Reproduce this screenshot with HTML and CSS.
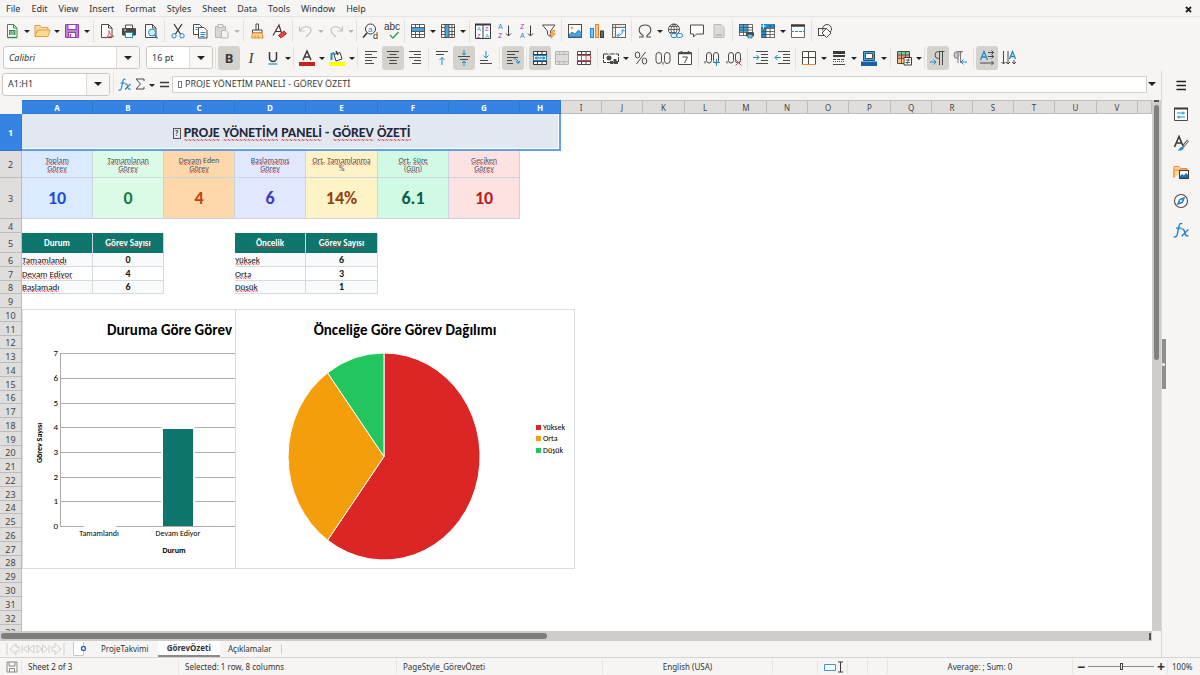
FILE: index.html
```html
<!DOCTYPE html>
<html lang="en">
<head>
<meta charset="utf-8">
<title>Spreadsheet</title>
<link rel="stylesheet" href="styles.css">
</head>
<body>
<div class="app">
  <header class="menubar">
    <nav class="menus" aria-label="Menu">
      <button>File</button><button>Edit</button><button>View</button><button>Insert</button><button>Format</button><button>Styles</button><button>Sheet</button><button>Data</button><button>Tools</button><button>Window</button><button>Help</button>
    </nav>
    <button class="close" aria-label="Close"><svg width="7" height="7" viewBox="0 0 7 7"><path d="M1 1l5 5M6 1L1 6" stroke="#222" stroke-width="1.8"/></svg></button>
  </header>

  <div class="toolbar">
    <button class="tb" aria-label="New"><svg viewBox="0 0 16 16"><path d="M3.500 1.500h6l3.500 3.500v9.500H3.500z" fill="#fff" stroke="#309048"/><path d="M9.500 1.500v3.500H13" fill="none" stroke="#309048"/><path d="M3.500 14.500h9.500" stroke="#309048" stroke-width="1.500"/><rect x="5" y="7" width="6.500" height="5" fill="#309048"/><path d="M6 9h4.500M6 11h4.500" stroke="#fff" stroke-width=".8"/></svg></button><button class="drop" aria-label="New options"></button>
    <button class="tb" aria-label="Open"><svg viewBox="0 0 16 16"><path d="M1 13.500V2.500h5l1.500 2H14v3" fill="#fbd9a5" stroke="#ed9a45"/><path d="M1 13.500L3.500 7H16l-2 6.500z" fill="#f8db8f" stroke="#ed9a45"/></svg></button><button class="drop" aria-label="Open options"></button>
    <button class="tb" aria-label="Save"><svg viewBox="0 0 16 16"><path d="M1.500 1.500h13v13h-13z" fill="#c17fd2" stroke="#9a3fb0"/><rect x="4" y="1.500" width="8" height="5" fill="#fff" stroke="#9a3fb0"/><rect x="4.500" y="9.500" width="7" height="5" fill="#fff" stroke="#9a3fb0"/><path d="M6.500 11v3" stroke="#9a3fb0" stroke-width="1.500"/></svg></button><button class="drop" aria-label="Save options"></button>
    <span class="sep"></span>
    <button class="tb" aria-label="Export as PDF"><svg viewBox="0 0 16 16"><path d="M2.500 1.500h7l3.500 3.500v9.500H2.500z" fill="#fff" stroke="#4a4a48"/><path d="M9.500 1.500v3.500H13" fill="none" stroke="#4a4a48"/><path d="M6.500 15c3-1.500 4-4.500 3.500-7.500 0 3.500 2 5 5 6-3-.5-5.500 0-8.500 1.500z" fill="#fff" stroke="#e0444e" stroke-width=".9"/></svg></button>
    <button class="tb" aria-label="Print"><svg viewBox="0 0 16 16"><path d="M4.500 5V2h7v3" fill="#fff" stroke="#4a4a48"/><rect x="1" y="5" width="14" height="7.500" rx="1" fill="#4a4a48"/><rect x="4.500" y="9.500" width="7" height="5" fill="#fff" stroke="#1e8bcd"/><path d="M3 7h2" stroke="#fff"/></svg></button>
    <button class="tb" aria-label="Print preview"><svg viewBox="0 0 16 16"><path d="M2.500 1.500h7l3.500 3.500v9.500H2.500z" fill="#fff" stroke="#4a4a48"/><path d="M9.500 1.500v3.500H13" fill="none" stroke="#4a4a48"/><circle cx="9" cy="9.500" r="3.500" fill="#d4ecfa" stroke="#1e8bcd"/><path d="M11.500 12l3 3.500" stroke="#1e8bcd" stroke-width="1.500"/></svg></button>
    <span class="sep"></span>
    <button class="tb" aria-label="Cut"><svg viewBox="0 0 16 16"><path d="M4 1l6.500 10M12 1L5.500 11" stroke="#3a3a38" stroke-width="1.300"/><circle cx="4" cy="12.800" r="2.200" fill="none" stroke="#1e8bcd"/><circle cx="12" cy="12.800" r="2.200" fill="none" stroke="#1e8bcd"/></svg></button>
    <button class="tb" aria-label="Copy"><svg viewBox="0 0 16 16"><path d="M1.500 1.500h6l2.500 2.500v7.500H1.500z" fill="#fff" stroke="#4a4a48"/><path d="M6.500 4.500h5.500l3 3v7.500H6.500z" fill="#fff" stroke="#4a4a48"/><path d="M8.500 9.500h5M8.500 11.500h5M8.500 13.500h4M3.500 4.500h3M3.500 6.500h2" stroke="#1e8bcd"/></svg></button>
    <button class="tb" aria-label="Paste" disabled><svg viewBox="0 0 16 16"><path d="M1.500 3.500h10v11h-10z" fill="#d8d7d5" stroke="#b8b7b5"/><path d="M4 1.500h5v3H4z" fill="#eee" stroke="#b8b7b5"/><path d="M7.500 7.500h4.500l2 2v5.500H7.500z" fill="#f6f5f4" stroke="#b8b7b5"/></svg></button><button class="drop" aria-label="Paste options" disabled></button>
    <span class="sep"></span>
    <button class="tb" aria-label="Clone formatting"><svg viewBox="0 0 16 16"><path d="M7 1h2.500v6H7z" fill="#fff" stroke="#4a4a48"/><path d="M3.500 7h9.500v3H3.500z" fill="#fff" stroke="#4a4a48"/><path d="M3.500 10h9.500l1 5H2.500z" fill="#f8db8f" stroke="#ed8733"/><path d="M6 12v3M9 12v3" stroke="#ed8733"/></svg></button>
    <button class="tb" aria-label="Clear formatting"><svg viewBox="0 0 16 16"><path d="M2 12.500L8 2l2.500 8M4.500 8.500h6" fill="none" stroke="#3a3a38" stroke-width="1.200"/><path d="M7.500 12.500l5.500-4.500 2.500 2.500-5.500 4.500z" fill="#e0444e" stroke="#c9211e"/></svg></button>
    <span class="sep"></span>
    <button class="tb" aria-label="Undo" disabled><svg viewBox="0 0 16 16"><path d="M1.500 3.500v4.500h5M2 7.500c3-5 11-5 11 0 0 3-3 4-5 6.500" fill="none" stroke="#c3c2c0" stroke-width="1.200"/></svg></button><button class="drop" aria-label="Undo list" disabled></button>
    <button class="tb" aria-label="Redo" disabled><svg viewBox="0 0 16 16"><path d="M14.500 3.500v4.500h-5M14 7.500c-3-5-11-5-11 0 0 3 3 4 5 6.500" fill="none" stroke="#c3c2c0" stroke-width="1.200"/></svg></button><button class="drop" aria-label="Redo list" disabled></button>
    <span class="sep sep-tight"></span>
    <button class="tb" aria-label="Find and replace"><svg viewBox="0 0 16 16"><circle cx="8.500" cy="6" r="5" fill="#fff" stroke="#3a3a38"/><path d="M5 10L1 14.500" stroke="#3a3a38" stroke-width="1.600"/><text x="6" y="8.500" font-size="8" fill="#1e8bcd">a</text><text x="11" y="15.500" font-size="9" fill="#3a3a38">d</text></svg></button>
    <button class="tb" aria-label="Spelling"><svg viewBox="0 0 16 16"><text x="0" y="7" font-size="10" fill="#3a3a38">abc</text><path d="M6 12l3 3 5.500-6" fill="none" stroke="#30a058" stroke-width="1.400"/></svg></button>
    <span class="sep sep-tight"></span>
    <button class="tb" aria-label="Row"><svg viewBox="0 0 16 16"><path d="M1.500 1.500h13v13h-13z" fill="#fff"/><path d="M1 5h14v3.500H1z" fill="#49a4e0"/><path d="M1.500 1.500h13v13h-13zM1 4.500h14M1 8.500h14M1 11.500h14M5.500 1v4M9.500 1v4M5.500 9v6M9.500 9v6" fill="none" stroke="#4a4a48" stroke-width=".9"/></svg></button><button class="drop" aria-label="Row options"></button>
    <button class="tb" aria-label="Column"><svg viewBox="0 0 16 16"><path d="M1.500 1.500h13v13h-13z" fill="#fff"/><path d="M5 1h4v14H5z" fill="#49a4e0"/><path d="M1.500 1.500h13v13h-13zM1 4.500h4M9 4.500h6M1 8.500h4M9 8.500h6M1 11.500h4M9 11.500h6M5 1v14M9 1v14M12 1v14" fill="none" stroke="#4a4a48" stroke-width=".9"/></svg></button><button class="drop" aria-label="Column options"></button>
    <span class="sep"></span>
    <button class="tb" aria-label="Sort"><svg viewBox="0 0 16 16"><path d="M.5 1.500h15v14H.5z" fill="#fff" stroke="#3a3a38"/><path d="M0 1.500h16" stroke="#3a3a38" stroke-width="2"/><path d="M8 2v13" stroke="#3a3a38"/><g font-size="6"><text x="2" y="8">A</text><text class="z" x="2" y="15">Z</text><text class="z" x="10" y="8">Z</text><text x="10" y="15">A</text></g></svg></button>
    <button class="tb" aria-label="Sort ascending"><svg viewBox="0 0 16 16"><g font-size="7"><text x="1" y="6">A</text><text class="z" x="1" y="15">Z</text></g><path d="M11.500 2.500v10M9 10.500l2.500 2.500 2.500-2.500" fill="none" stroke="#3a3a38"/></svg></button>
    <button class="tb" aria-label="Sort descending"><svg viewBox="0 0 16 16"><g font-size="7"><text class="z" x="1" y="6">Z</text><text x="1" y="15">A</text></g><path d="M11.500 2.500v10M9 10.500l2.500 2.500 2.500-2.500" fill="none" stroke="#3a3a38"/></svg></button>
    <button class="tb" aria-label="AutoFilter"><svg viewBox="0 0 16 16"><path d="M1.500 2h12.500L9.500 8v5.500l-3-2V8z" fill="#fff" stroke="#4a4a48"/><path d="M11.500 7.500l-3 4.500h2.500l-1 3.500 4.500-5h-2.500l2-3z" fill="#f8b35a" stroke="#ed8733" stroke-width=".7"/></svg></button>
    <span class="sep sep-tight"></span>
    <button class="tb" aria-label="Image"><svg viewBox="0 0 16 16"><rect x="1.500" y="1.500" width="13" height="13" fill="#fff" stroke="#4a4a48"/><circle cx="5" cy="5" r="1.500" fill="#f8b35a"/><path d="M2 14v-2l3-3 3 2 3.500-4 3 3v4z" fill="#49a4e0" stroke="#1e6fae" stroke-width=".8"/></svg></button>
    <button class="tb" aria-label="Chart"><svg viewBox="0 0 16 16"><rect x="1.500" y="5.500" width="3" height="9" fill="#7fc0ec" stroke="#1e8bcd"/><rect x="6.500" y="1.500" width="3" height="13" fill="#fbc27a" stroke="#ed8733"/><rect x="11.500" y="8" width="3" height="6.500" fill="#6a6a68" stroke="#3a3a38"/></svg></button>
    <button class="tb" aria-label="Pivot table"><svg viewBox="0 0 16 16"><rect x="1.500" y="1.500" width="13" height="13" fill="#fff" stroke="#6a6a68"/><path d="M1.500 4.500h13M4.500 1.500v13" stroke="#6a6a68"/><path d="M2 3h12M3 5v9" stroke="#bbb" stroke-dasharray="1.500 1"/><path d="M6.500 12.500c3 0 5.500-2 5.500-5.500M10 8.500l2-2 2 2M8 10.500l-2 2 2 2" fill="none" stroke="#1e8bcd"/></svg></button>
    <span class="sep sep-tight"></span>
    <button class="tb" aria-label="Special character"><svg viewBox="0 0 16 16"><path d="M2 14h4v-1.500C-.5 8 2 2 8 2s8.500 6 2 10.500V14h4" fill="none" stroke="#4a4a48" stroke-width="1.100"/></svg></button><button class="drop" aria-label="Recent characters"></button>
    <button class="tb" aria-label="Hyperlink"><svg viewBox="0 0 16 16"><circle cx="7" cy="6.500" r="5.500" fill="#fff" stroke="#4a4a48"/><path d="M1.500 6.500h11M7 1v11M2.500 3.500h9M2.500 9.500h7M7 1c-4 3-4 8 0 11M7 1c4 3 4 8 0 11" fill="none" stroke="#4a4a48" stroke-width=".8"/><rect x="4" y="10.500" width="6" height="4" rx="2" fill="#f6f5f4" stroke="#1e8bcd"/><rect x="9.500" y="10.500" width="6" height="4" rx="2" fill="none" stroke="#1e8bcd"/></svg></button>
    <button class="tb" aria-label="Comment"><svg viewBox="0 0 16 16"><path d="M1.500 2h13v9H7.500l-3 3v-3h-3z" fill="#fff" stroke="#4a4a48"/></svg></button>
    <button class="tb" aria-label="Headers and footers" disabled><svg viewBox="0 0 16 16"><path d="M3 1.500h7l3 3v10H3z" fill="#dcdbd9" stroke="#bbbab8"/><path d="M5 12h6" stroke="#bbbab8" stroke-width="2"/></svg></button>
    <span class="sep"></span>
    <button class="tb" aria-label="Print area"><svg viewBox="0 0 16 16"><path d="M1.500 1.500h13v11h-13z" fill="#fff"/><path d="M1 1h9v8H1z" fill="#49a4e0"/><path d="M1.500 1.500h13v11h-13zM1 4.500h14M1 7h14M1 9.500h14M5.500 1v12M10 1v12" fill="none" stroke="#4a4a48" stroke-width=".8"/><rect x="8" y="9" width="8" height="4.500" rx="1" fill="#4a4a48"/><rect x="10" y="11.500" width="4" height="3.500" fill="#7fc0ec" stroke="#1e6fae" stroke-width=".7"/></svg></button>
    <button class="tb" aria-label="Freeze rows and columns"><svg viewBox="0 0 16 16"><path d="M2 2h13v13H2z" fill="#fff"/><path d="M1 1h14v4H6v10H1z" fill="#1e8bcd"/><path d="M6 5v10M10 2v13M14.500 2v13M1.500 5.500h13M1.500 8.500h13M1.500 11.500h13M1.500 14.500h13" stroke="#4a4a48" stroke-width=".8"/><path d="M1 3h5M3.500 1v5" stroke="#fff" stroke-width=".8"/></svg></button><button class="drop" aria-label="Freeze options"></button>
    <button class="tb" aria-label="Split window"><svg viewBox="0 0 16 16"><path d="M1.500 2.500h13v12h-13z" fill="#fff" stroke="#6a6a68"/><path d="M1 2.500h14" stroke="#3a3a38" stroke-width="2.500"/><path d="M1 8.500h14" stroke="#1e8bcd" stroke-dasharray="3 1"/></svg></button>
    <span class="sep"></span>
    <button class="tb" aria-label="Draw functions"><svg viewBox="0 0 16 16"><rect x="1.500" y="5.500" width="8" height="7" fill="#fff" stroke="#4a4a48"/><circle cx="10" cy="6" r="4.500" fill="none" stroke="#4a4a48"/><path d="M9.500 5.500l4.500 4.500-4.500 4.500L5 10z" fill="#fff" stroke="#4a4a48"/></svg></button>
  </div>

  <div class="toolbar">
    <div class="combo combo-font"><input class="italic" aria-label="Font name" value="Calibri"><button aria-label="Font list"></button></div>
    <div class="combo combo-size"><input aria-label="Font size" value="16 pt"><button aria-label="Size list"></button></div>
    <span class="sep"></span>
    <button class="tb on letter" aria-label="Bold"><b>B</b></button>
    <button class="tb letter" aria-label="Italic"><i>I</i></button>
    <button class="tb" aria-label="Underline"><svg viewBox="0 0 16 16"><path d="M4.500 2v6a3.500 3.500 0 0 0 7 0V2" fill="none" stroke="#3a3a38" stroke-width="1.500"/><path d="M3.500 14h9" stroke="#1e8bcd" stroke-width="1.200"/></svg></button><button class="drop" aria-label="Underline styles"></button>
    <span class="sep sep-tight"></span>
    <button class="tb" aria-label="Font color"><svg viewBox="0 0 16 16"><path d="M4 10L8 1l4 9M5.500 7h5" fill="none" stroke="#3a3a38" stroke-width="1.500"/><rect x="0" y="12" width="16" height="4" fill="#c9211e"/></svg></button><button class="drop" aria-label="Font colors"></button>
    <button class="tb" aria-label="Highlighting"><svg viewBox="0 0 16 16"><path d="M5 4.500l6-2 2 6.500-6 2z" fill="#fff" stroke="#3a3a38"/><path d="M7 1l2 4" stroke="#3a3a38" stroke-width="1.500"/><path d="M2.500 10V4l3-1" fill="none" stroke="#1e8bcd" stroke-width="2"/><rect x="0" y="12" width="16" height="4" fill="#ffff00"/></svg></button><button class="drop" aria-label="Highlighting colors"></button>
    <span class="sep sep-tight"></span>
    <button class="tb" aria-label="Align left"><svg viewBox="0 0 16 16"><path d="M2 1.500h12M2 4.500h7M2 7.500h12M2 10.500h7M2 13.500h9" stroke="#4a4a48"/></svg></button>
    <button class="tb on" aria-label="Center"><svg viewBox="0 0 16 16"><path d="M2 1.500h12M4.500 4.500h7M2 7.500h12M4.500 10.500h7M4 13.500h8" stroke="#4a4a48"/></svg></button>
    <button class="tb" aria-label="Align right"><svg viewBox="0 0 16 16"><path d="M2 1.500h12M7 4.500h7M2 7.500h12M7 10.500h7M5 13.500h9" stroke="#4a4a48"/></svg></button>
    <span class="sep"></span>
    <button class="tb" aria-label="Align top"><svg viewBox="0 0 16 16"><path d="M2 1.500h12M2 4.500h8" stroke="#4a4a48"/><path d="M8 15V7.500M5.500 10L8 7.500l2.500 2.500" fill="none" stroke="#1e8bcd"/></svg></button>
    <button class="tb on" aria-label="Center vertically"><svg viewBox="0 0 16 16"><path d="M2 6.500h12M4 9.500h8" stroke="#4a4a48"/><path d="M8 0v5M6 3l2 2 2-2M8 16v-5M6 13l2-2 2 2" fill="none" stroke="#1e8bcd"/></svg></button>
    <button class="tb" aria-label="Align bottom"><svg viewBox="0 0 16 16"><path d="M2 10.500h8M2 13.500h12" stroke="#4a4a48"/><path d="M8 1v7M5.500 5.500L8 8l2.500-2.500" fill="none" stroke="#1e8bcd"/></svg></button>
    <span class="sep"></span>
    <button class="tb on" aria-label="Wrap text"><svg viewBox="0 0 16 16"><path d="M2 1.500h12M2 4.500h8M2 7.500h11M2 10.500h5M2 13.500h6" stroke="#4a4a48"/><path d="M8.500 9c3-.5 4.500 1 5 4M11 11.500l2.500 2L15 11" fill="none" stroke="#1e8bcd"/></svg></button>
    <span class="sep"></span>
    <button class="tb on" aria-label="Merge and center"><svg viewBox="0 0 16 16"><path d="M1.500 1.500h13v13h-13z" fill="#fff"/><path d="M1.500 1.500h13v13h-13zM1 4.500h14M1 11.500h14M5.500 1v4M10 1v4M5.500 11v4M10 11v4" fill="none" stroke="#3a3a38"/><path d="M1.500 5.500h13v5h-13z" fill="#d4ecfa" stroke="#1e8bcd"/><path d="M3 8h10M5 6.500L3.500 8 5 9.500M11 6.500L12.500 8 11 9.500" fill="none" stroke="#1e6fae"/></svg></button>
    <button class="tb" aria-label="Merge cells" disabled><svg viewBox="0 0 16 16"><path d="M1.500 1.500h13v13h-13zM1 4.500h14M1 11.500h14M5.500 1v4M10 1v4M5.500 11v4M10 11v4" fill="#dddcda" stroke="#b8b7b5"/></svg></button>
    <button class="tb" aria-label="Unmerge cells"><svg viewBox="0 0 16 16"><path d="M1.500 1.500h13v13h-13zM1 4.500h14M1 11.500h14M5.500 1v4M10 1v4M5.500 11v4M10 11v4" fill="#fff" stroke="#4a4a48"/><path d="M1.500 5.500h13v5h-13zM5.500 5v6M10 5v6" fill="#fff" stroke="#e0444e"/></svg></button>
    <span class="sep"></span>
    <button class="tb" aria-label="Currency"><svg viewBox="0 0 16 16"><path d="M.5 4h15v8.500H.5z" fill="#fff" stroke="#3a3a38" stroke-dasharray="5 1"/><circle cx="6" cy="8" r="2.500" fill="#4a4a48"/><path d="M7 14V11h3v3zM10.500 14V9h3v5zM13.500 14v-3H15v3z" fill="#4a4a48"/></svg></button><button class="drop" aria-label="Currencies"></button>
    <button class="tb" aria-label="Percent"><svg viewBox="0 0 16 16"><path d="M12.500 2l-9 12" stroke="#4a4a48"/><ellipse cx="4.500" cy="5" rx="2.300" ry="3" fill="none" stroke="#4a4a48"/><ellipse cx="11.500" cy="11" rx="2.300" ry="3" fill="none" stroke="#4a4a48"/></svg></button>
    <button class="tb" aria-label="Number"><svg viewBox="0 0 16 16"><rect x="1" y="2.500" width="5.500" height="11" rx="2.750" fill="none" stroke="#4a4a48"/><rect x="9.500" y="2.500" width="5.500" height="11" rx="2.750" fill="none" stroke="#4a4a48"/><path d="M8 12v2.500" stroke="#4a4a48"/></svg></button>
    <button class="tb" aria-label="Date"><svg viewBox="0 0 16 16"><path d="M1.500 2.500h13v12h-13z" fill="#fff" stroke="#4a4a48"/><path d="M1.500 3.500h13M4.500 1v3M11.500 1v3" stroke="#4a4a48" stroke-width="1.500"/><path d="M5.500 7h5l-3 6" fill="none" stroke="#4a4a48"/></svg></button>
    <span class="sep"></span>
    <button class="tb" aria-label="Add decimal place"><svg viewBox="0 0 16 16"><path d="M1 11v2.500" stroke="#4a4a48"/><rect x="2.500" y="2.500" width="5" height="10.500" rx="2.500" fill="none" stroke="#4a4a48"/><rect x="9.500" y="2.500" width="5" height="10.500" rx="2.500" fill="none" stroke="#4a4a48"/><path d="M9 12.500h7M12.500 9v7" stroke="#1e8bcd"/></svg></button>
    <button class="tb" aria-label="Delete decimal place"><svg viewBox="0 0 16 16"><path d="M1 11v2.500" stroke="#4a4a48"/><rect x="2.500" y="2.500" width="5" height="10.500" rx="2.500" fill="none" stroke="#4a4a48"/><rect x="9.500" y="2.500" width="5" height="10.500" rx="2.500" fill="none" stroke="#4a4a48"/><path d="M9.500 9.500l6 6M15.500 9.500l-6 6" stroke="#e0444e"/></svg></button>
    <span class="sep"></span>
    <button class="tb" aria-label="Increase indent"><svg viewBox="0 0 16 16"><path d="M3 1.500h12M8 4.500h7M8 7.500h7M8 10.500h7M3 13.500h12" stroke="#4a4a48"/><path d="M0 7.500h6M3.500 5L6 7.500 3.500 10" fill="none" stroke="#1e8bcd"/></svg></button>
    <button class="tb" aria-label="Decrease indent"><svg viewBox="0 0 16 16"><path d="M3 1.500h12M8 4.500h7M8 7.500h7M8 10.500h7M3 13.500h12" stroke="#4a4a48"/><path d="M0 7.500h6M2.500 5L0 7.500 2.500 10" fill="none" stroke="#1e8bcd"/></svg></button>
    <span class="sep sep-tight"></span>
    <button class="tb" aria-label="Borders"><svg viewBox="0 0 16 16"><path d="M1.500 14.500v-13h13v13M7.500 1.500v13M1.500 7.500h13" fill="#fff" stroke="#4a4a48"/><path d="M1 14.500h14" stroke="#ed8733"/></svg></button><button class="drop" aria-label="Border presets"></button>
    <button class="tb" aria-label="Border style"><svg viewBox="0 0 16 16"><path d="M2 2.500h12" stroke="#3a3a38" stroke-width="3"/><path d="M2 6h12" stroke="#3a3a38" stroke-width="2"/><path d="M2 9.500h12" stroke="#4a4a48" stroke-dasharray="3 1"/><path d="M2 11.500h12" stroke="#4a4a48" stroke-dasharray="1 1"/><path d="M2 14.500h12" stroke="#4a4a48"/></svg></button><button class="drop" aria-label="Border styles"></button>
    <button class="tb" aria-label="Border color"><svg viewBox="0 0 16 16"><path d="M2.500 1.500h11v9h-11z" fill="#49a4e0" stroke="#1e4f80"/><path d="M4.500 3.500h7v5h-7z" fill="#fff" stroke="#4a4a48"/><path d="M0 11.500h16V16H0z" fill="#1a5fa8"/></svg></button><button class="drop" aria-label="Border colors"></button>
    <span class="sep"></span>
    <button class="tb" aria-label="Conditional formatting"><svg viewBox="0 0 16 16"><path d="M1.500 1.500h12v12h-12z" fill="#fff" stroke="#4a4a48"/><path d="M2 2h11v3H2z" fill="#7bc98f"/><path d="M2 5h11v3.500H2z" fill="#f08a80"/><path d="M2 8.500h5V13H2z" fill="#f8c27a"/><path d="M1.500 5h12M1.500 8.500h12M5.500 1.500v12M9.500 1.500v7" stroke="#4a4a48" stroke-width=".8"/><path d="M8 7.500h7.500V15H8z" fill="#fff" stroke="#3a3a38"/><path d="M9.500 10h4.500M9.500 12.500h4.500M13 8.500l-2 5.500" stroke="#3a3a38" stroke-width=".8"/></svg></button><button class="drop" aria-label="Conditional options"></button>
    <span class="sep sep-tight"></span>
    <button class="tb on" aria-label="Left to right"><svg viewBox="0 0 16 16"><path d="M14.500 1.500H8.500a3.500 3.500 0 0 0 0 7H9M9.500 1.500V15M12.500 1.500V15" fill="none" stroke="#4a4a48"/><path d="M0 12h6M3.500 9.500L6 12l-2.500 2.500" fill="none" stroke="#1e8bcd"/></svg></button>
    <button class="tb" aria-label="Right to left"><svg viewBox="0 0 16 16"><path d="M11 1.500H5.500a3.500 3.500 0 0 0 0 7H6M6 1.500V13M8.500 1.500V13" fill="#ccc" stroke="#7a7a78"/><path d="M15 12H9M11.500 9.500L9 12l2.500 2.500" fill="none" stroke="#1e8bcd"/></svg></button>
    <span class="sep"></span>
    <button class="tb on" aria-label="Horizontal text"><svg viewBox="0 0 16 16"><path d="M1.500 10L5 1.500 8.500 10M3 7h4" fill="none" stroke="#1e8bcd" stroke-width="1.300"/><path d="M9 2.500h5.500M9 6.500h5.500M1 13h13.500M12.500.5l2 2-2 2M12.500 4.500l2 2-2 2M12.500 11l2 2-2 2" fill="none" stroke="#4a4a48"/></svg></button>
    <button class="tb" aria-label="Vertical text"><svg viewBox="0 0 16 16"><path d="M8.500 9L11.500 1.500 14.500 9M9.500 6.500h4" fill="none" stroke="#1e8bcd" stroke-width="1.300"/><path d="M2.500 1v13M7 1v13M13 10v4M.5 12l2 2 2-2M5 12l2 2 2-2M11 12l2 2 2-2" fill="none" stroke="#4a4a48"/></svg></button>
  </div>

  <div class="work">
    <main class="doc">
      <div class="formula">
        <div class="combo combo-name"><input aria-label="Name box" value="A1:H1"><button aria-label="Name list"></button></div>
        <span class="sep"></span>
        <button class="fb" aria-label="Function wizard"><svg width="13" height="13" viewBox="0 0 13 13"><path d="M7.500 1.500C6 .5 5.200 1.500 4.800 3.500L3.500 10c-.4 2-1.500 2.500-3 1.800M2.500 5h4.500" fill="none" stroke="#1e7fc8" stroke-width="1.100"/><path d="M7 6c1.500-.5 2 0 2.500 2.500S11 11.500 12.500 11M12.500 6l-5.500 5.500" fill="none" stroke="#1e7fc8" stroke-width="1.100"/></svg></button>
        <button class="fb" aria-label="Select function"><svg width="10" height="12" viewBox="0 0 10 12"><path d="M9 3V1H1l4.500 5L1 11h8V9" fill="none" stroke="#4a4a48"/></svg></button><button class="drop" aria-label="Functions"></button>
        <button class="fb" aria-label="Formula"><svg width="9" height="7" viewBox="0 0 9 7"><path d="M0 1.500h9M0 5.500h9" stroke="#3a3a38" stroke-width="1.500"/></svg></button>
        <label class="input-line"><span class="missing"></span><input aria-label="Input line" value="PROJE YÖNETİM PANELİ - GÖREV ÖZETİ"></label>
        <button class="expand" aria-label="Expand formula bar"></button>
      </div>

      <div class="sheet">
        <div class="canvas">
          <table class="grid">
            <colgroup><col class="c-head"><col class="c-wide" span="4"><col class="c-wider"><col class="c-wide" span="2"><col class="c-std" span="3"><col class="c-end"><col class="c-std" span="4"><col class="c-end"><col class="c-std" span="4"><col class="c-end"><col class="c-std"><col></colgroup>
            <thead><tr><th class="corner"></th><th class="sel">A</th><th class="sel">B</th><th class="sel">C</th><th class="sel">D</th><th class="sel">E</th><th class="sel">F</th><th class="sel">G</th><th class="sel">H</th><th>I</th><th>J</th><th>K</th><th>L</th><th>M</th><th>N</th><th>O</th><th>P</th><th>Q</th><th>R</th><th>S</th><th>T</th><th>U</th><th>V</th><th></th></tr></thead>
            <tbody>
              <tr class="r-title"><th class="sel">1</th><td class="title" colspan="8"><span class="missing-q">?</span> <u>PROJE</u> <u>YÖNETİM</u> <u>PANELİ</u> - <u>GÖREV</u> <u>ÖZETİ</u></td><td colspan="15"></td></tr>
              <tr class="r-label"><th>2</th><td class="k blue"><u>Toplam</u><br><u>Görev</u></td><td class="k green"><u>Tamamlanan</u><br><u>Görev</u></td><td class="k orange"><u>Devam</u> Eden<br><u>Görev</u></td><td class="k indigo"><u>Başlamamış</u><br><u>Görev</u></td><td class="k yellow"><u>Ort.</u> <u>Tamamlanma</u><br>%</td><td class="k mint"><u>Ort.</u> <u>Süre</u><br>(<u>Gün</u>)</td><td class="k rose"><u>Geciken</u><br><u>Görev</u></td><td colspan="16"></td></tr>
              <tr class="r-value"><th>3</th><td class="v blue">10</td><td class="v green">0</td><td class="v orange">4</td><td class="v indigo">6</td><td class="v yellow">14%</td><td class="v mint">6.1</td><td class="v rose">10</td><td colspan="16"></td></tr>
              <tr class="r-std"><th>4</th><td colspan="23"></td></tr>
              <tr class="r-head"><th>5</th><td class="h">Durum</td><td class="h"><u>Görev</u> <u>Sayısı</u></td><td></td><td class="h"><u>Öncelik</u></td><td class="h"><u>Görev</u> <u>Sayısı</u></td><td colspan="18"></td></tr>
              <tr class="r-std"><th>6</th><td class="t alt"><u>Tamamlandı</u></td><td class="n alt">0</td><td></td><td class="t alt"><u>Yüksek</u></td><td class="n alt">6</td><td colspan="18"></td></tr>
              <tr class="r-std"><th>7</th><td class="t"><u>Devam</u> <u>Ediyor</u></td><td class="n">4</td><td></td><td class="t"><u>Orta</u></td><td class="n">3</td><td colspan="18"></td></tr>
              <tr class="r-short"><th>8</th><td class="t alt"><u>Başlamadı</u></td><td class="n alt">6</td><td></td><td class="t alt"><u>Düşük</u></td><td class="n alt">1</td><td colspan="18"></td></tr>
              <tr class="r-std"><th>9</th><td colspan="23"></td></tr>
              <tr class="r-std"><th>10</th><td colspan="23"></td></tr>
              <tr class="r-std"><th>11</th><td colspan="23"></td></tr>
              <tr class="r-short"><th>12</th><td colspan="23"></td></tr>
              <tr class="r-std"><th>13</th><td colspan="23"></td></tr>
              <tr class="r-std"><th>14</th><td colspan="23"></td></tr>
              <tr class="r-std"><th>15</th><td colspan="23"></td></tr>
              <tr class="r-short"><th>16</th><td colspan="23"></td></tr>
              <tr class="r-std"><th>17</th><td colspan="23"></td></tr>
              <tr class="r-std"><th>18</th><td colspan="23"></td></tr>
              <tr class="r-std"><th>19</th><td colspan="23"></td></tr>
              <tr class="r-short"><th>20</th><td colspan="23"></td></tr>
              <tr class="r-std"><th>21</th><td colspan="23"></td></tr>
              <tr class="r-std"><th>22</th><td colspan="23"></td></tr>
              <tr class="r-std"><th>23</th><td colspan="23"></td></tr>
              <tr class="r-short"><th>24</th><td colspan="23"></td></tr>
              <tr class="r-std"><th>25</th><td colspan="23"></td></tr>
              <tr class="r-std"><th>26</th><td colspan="23"></td></tr>
              <tr class="r-std"><th>27</th><td colspan="23"></td></tr>
              <tr class="r-short"><th>28</th><td colspan="23"></td></tr>
              <tr class="r-std"><th>29</th><td colspan="23"></td></tr>
              <tr class="r-std"><th>30</th><td colspan="23"></td></tr>
              <tr class="r-std"><th>31</th><td colspan="23"></td></tr>
              <tr class="r-std"><th>32</th><td colspan="23"></td></tr>
              <tr class="r-std"><th>33</th><td colspan="23"></td></tr>
            </tbody>
          </table>

          <svg class="chart chart-bar" width="214" height="261" viewBox="0 0 214 261">
            <rect x=".5" y=".5" width="240" height="259" fill="#fff" stroke="#dcdcdc"/>
            <text class="ct" x="85" y="26">Duruma Göre Görev</text>
            <path d="M38 44.500h176M38 69.500h176M38 94.500h176M38 118.500h176M38 143.500h176M38 168.500h176M38 192.500h176M38 217.500h176M38.500 44v174" stroke="#acacac" fill="none"/>
            <path d="M62 217.500h32" stroke="#fff" stroke-width="2"/>
            <rect x="139" y="118" width="34" height="99" fill="#fff"/>
            <rect x="141" y="120" width="30" height="97" fill="#0f766e"/>
            <g class="cn" text-anchor="end"><text x="36" y="47">7</text><text x="36" y="72">6</text><text x="36" y="97">5</text><text x="36" y="121">4</text><text x="36" y="146">3</text><text x="36" y="171">2</text><text x="36" y="195">1</text><text x="36" y="220">0</text></g>
            <g class="cl" text-anchor="middle"><text x="77" y="227">Tamamlandı</text><text x="156" y="227">Devam Ediyor</text></g>
            <g class="ca" text-anchor="middle"><text x="152" y="244">Durum</text><text transform="translate(20 134) rotate(-90)">Görev Sayısı</text></g>
          </svg>

          <svg class="chart chart-pie" width="340" height="261" viewBox="0 0 340 261">
            <rect x=".5" y=".5" width="339" height="259" fill="#fff" stroke="#dcdcdc"/>
            <text class="ct" x="170" y="26" text-anchor="middle">Önceliğe Göre Görev Dağılımı</text>
            <g stroke="#fff" stroke-linejoin="round">
              <path d="M149 147.500V44A96 103.500 0 1 1 92.600 231.200z" fill="#dc2626"/>
              <path d="M149 147.500L92.600 231.200A96 103.500 0 0 1 92.600 63.800z" fill="#f59e0b"/>
              <path d="M149 147.500L92.600 63.800A96 103.500 0 0 1 149 44z" fill="#22c55e"/>
            </g>
            <path d="M301 116h5v5h-5z" fill="#dc2626"/><path d="M301 127h5v5h-5z" fill="#f59e0b"/><path d="M301 139h5v5h-5z" fill="#22c55e"/>
            <g class="cl"><text x="308" y="121">Yüksek</text><text x="308" y="132">Orta</text><text x="308" y="144">Düşük</text></g>
          </svg>
        </div>
        <div class="vscroll"><span></span></div>
      </div>
      <div class="hscroll"><span></span><i></i></div>

      <div class="tabs">
        <div class="tabnav">
          <button aria-label="First sheet"><svg width="14" height="12" viewBox="0 0 14 12"><path d="M1 0v12M4 6l6-5.500v3.500h3v4h-3v3.500z" fill="none" stroke="#cfcecc"/></svg></button>
          <button aria-label="Previous sheet"><svg width="14" height="8" viewBox="0 0 14 8"><path d="M1 0v8M2.500 4l5-4v8zM8 4l5-4v8z" fill="none" stroke="#cfcecc"/></svg></button>
          <button aria-label="Next sheet"><svg width="14" height="8" viewBox="0 0 14 8"><path d="M13 0v8M11.500 4l-5-4v8zM6 4L1 0v8z" fill="none" stroke="#cfcecc"/></svg></button>
          <button aria-label="Last sheet"><svg width="14" height="12" viewBox="0 0 14 12"><path d="M13 0v12M10 6L4 .5v3.500H1v4h3v3.500z" fill="none" stroke="#cfcecc"/></svg></button>
        </div>
        <button class="add" aria-label="Add sheet"><svg width="14" height="14" viewBox="0 0 14 14"><path d="M.5 0v13.500h10V0" fill="#fff" stroke="#c9c8c6"/><circle cx="10.500" cy="6.500" r="2" fill="#fff" stroke="#2a66b0" stroke-width="1.400"/></svg></button>
        <button class="tab">ProjeTakvimi</button>
        <button class="tab active">GörevÖzeti</button>
        <button class="tab">Açıklamalar</button>
        <span class="tab-end"></span>
      </div>
    </main>

    <aside class="side">
      <div class="splitter"><span></span></div>
      <div class="deck">
        <button aria-label="Sidebar settings"><svg viewBox="0 0 16 16"><path d="M3.500 4.500h9.500M3.500 8.500h9.500M3.500 12.500h9.500" stroke="#222" stroke-width="1.300"/></svg></button>
        <button aria-label="Properties"><svg viewBox="0 0 16 16"><path d="M1.500 2.500h13v12h-13z" fill="#fff" stroke="#4a4a48"/><path d="M1 2.500h14" stroke="#3a3a38" stroke-width="2"/><path d="M4 7h8M10 5.500v3M4 11h8M6 9.500v3" stroke="#1e8bcd"/></svg></button>
        <button aria-label="Styles"><svg viewBox="0 0 16 16"><path d="M1.500 12L6 1.500 10 11M3 8h6" fill="none" stroke="#3a3a38" stroke-width="1.600"/><path d="M15 5.500l-5 6" stroke="#4a4a48" stroke-width="2.500"/><path d="M14.800 5.800l-4 5" stroke="#fff"/><path d="M4.500 15.500c2 .5 6 0 6.500-3-2-2-4 0-4.500 1.500z" fill="#1e8bcd"/></svg></button>
        <button aria-label="Gallery"><svg viewBox="0 0 16 16"><path d="M1 13.500V2.500h5l1.500 2H14v2" fill="#fbd9a5" stroke="#ed8733"/><path d="M1 13.500V6h13" fill="#f8db8f" stroke="#ed8733"/><rect x="6.500" y="6.500" width="9" height="8" fill="#fff" stroke="#3a3a38"/><path d="M7 14v-2l2-2 2 1.500 2-2.500 2 2v3z" fill="#1e6fae"/></svg></button>
        <button aria-label="Navigator"><svg viewBox="0 0 16 16"><circle cx="8" cy="8" r="6.500" fill="#fff" stroke="#4a4a48" stroke-width="1.100"/><path d="M11.500 4.500l-2 5-5 2 2-5z" fill="#49a4e0" stroke="#1e6fae"/><circle cx="8" cy="8" r="1" fill="#fff"/></svg></button>
        <button aria-label="Functions"><svg viewBox="0 0 13 13"><path d="M7.500 1.500C6 .5 5.200 1.500 4.800 3.500L3.500 10c-.4 2-1.500 2.500-3 1.800M2.500 5h4.500" fill="none" stroke="#1e7fc8" stroke-width="1.100"/><path d="M7 6c1.500-.5 2 0 2.500 2.500S11 11.500 12.500 11M12.500 6l-5.500 5.500" fill="none" stroke="#1e7fc8" stroke-width="1.100"/></svg></button>
      </div>
    </aside>
  </div>

  <footer class="status">
    <span><svg width="12" height="12" viewBox="0 0 12 12"><path d="M1 1h10v10H1zM3 1v4h6V1M3.500 11V7.500h5V11" fill="#f6f5f4" stroke="#8a8a88"/></svg></span>
    <span>Sheet 2 of 3</span>
    <span>Selected: 1 row, 8 columns</span>
    <span>PageStyle_GörevÖzeti</span>
    <span class="mid">English (USA)</span>
    <span></span>
    <span><svg width="20" height="12" viewBox="0 0 20 12"><path d="M.5 3.500h11v6H.5z" fill="#fff" stroke="#3b97d3"/><path d="M14 1h5M14 11h5M16.500 1v10" stroke="#3a3a38"/></svg></span>
    <span></span>
    <span></span>
    <span class="mid">Average: ; Sum: 0</span>
    <span class="zoom"><button aria-label="Zoom out">−</button><input type="range" min="0" max="100" value="50" aria-label="Zoom"><button aria-label="Zoom in">+</button></span>
    <span class="pct">100%</span>
  </footer>
</div>
</body>
</html>
```

FILE: styles.css
```css
* { box-sizing: border-box; }
body { margin: 0; background: #f6f5f4; color: #2e3436; font: 9px/12px "Noto Sans", "Open Sans", sans-serif; }
button { margin: 0; padding: 0; border: 0; background: none; color: inherit; font: inherit; }
input { min-width: 0; margin: 0; border: 0; background: none; color: inherit; font: inherit; outline: 0; }
svg { display: block; }
.app { display: flex; flex-direction: column; height: 100vh; overflow: hidden; }

.menubar { display: flex; justify-content: space-between; align-items: center; height: 17px; padding: 2px 7px 0 6px; flex: none; border-bottom: 1px solid #e6e5e3; }
.menus { display: flex; gap: 11px; }
.close { width: 8px; }

.toolbar { display: flex; align-items: center; height: 27px; padding-left: 1px; flex: none; }
.tb { display: flex; flex: none; align-items: center; justify-content: center; width: 22px; height: 24px; border-radius: 3px; }
.tb svg { width: 16px; height: 16px; overflow: visible; font-family: "Liberation Sans", sans-serif; fill: #1e8bcd; }
.tb .z { fill: #9a3fb0; }
.tb.on { background: #d5d2ce; }
.letter { color: #3a3a38; font-size: 13px; line-height: 16px; }
.letter i { font-family: "Liberation Serif", serif; font-size: 15px; }
.drop { flex: none; width: 8px; height: 24px; }
.drop::before, .expand::before, .combo button::before { content: ""; display: block; width: 0; margin: 2px auto 0; border: 3px solid transparent; border-top-color: #222; border-bottom: 0; }
.drop:disabled::before { border-top-color: #b8b7b5; }
.combo button::before, .expand::before { margin-top: 0; border-width: 4px; border-bottom: 0; }
.sep { flex: none; width: 1px; height: 22px; margin: 0 2px; background: #e3e2e0; }
.sep-tight { margin-left: 1px; }

.combo { display: flex; flex: none; height: 23px; border: 1px solid #cdc7c2; border-radius: 3px; background: #fff; overflow: hidden; }
.combo input { flex: 1; padding: 0 5px; }
.combo button { width: 23px; border-left: 1px solid #dedbd8; background: #f8f7f6; }
.combo-font { width: 137px; margin: 0 6px 0 2px; }
.combo-size { width: 67px; }
.combo-name { width: 108px; margin-right: 1px; }
.italic { font-style: italic; }

.work { display: flex; flex: 1; min-height: 0; }
.doc { display: flex; flex: 1; flex-direction: column; min-width: 0; }
.formula { display: flex; flex: none; align-items: center; height: 29px; padding: 0 4px 3px 2px; }
.fb { display: flex; flex: none; justify-content: center; width: 16px; }
.input-line { display: flex; flex: 1; align-items: center; gap: 3px; height: 17px; padding-left: 5px; border: 1px solid #d5d2ce; background: #fff; }
.input-line input { flex: 1; padding: 0; color: #3c3c3c; }
.missing { width: 4px; height: 7px; border: 1px solid #777; }
.expand { width: 10px; }

.sheet { display: flex; flex: 1; min-height: 0; }
.canvas { position: relative; flex: 1; min-width: 0; overflow: hidden; background: #fff; }
.grid { width: 100%; table-layout: fixed; border-spacing: 0; color: #1f2937; font: 8px/8px Carlito, Lato, sans-serif; }
.c-head { width: 22px; }
.c-wide { width: 71px; }
.c-wider { width: 72px; }
.c-std { width: 41px; }
.c-end { width: 42px; }
.grid td { padding: 0; overflow: hidden; white-space: nowrap; }
.grid th { padding: 1px 0 0; border-right: 1px solid #bdbcba; border-bottom: 1px solid #bdbcba; background: #dfdedd; color: #444; font: 9px/9px "Noto Sans", sans-serif; }
.grid thead th { height: 14px; border-top: 1px solid #bdbcba; font-size: 8px; line-height: 8px; }
.grid th.sel { border-color: #2f77cf; background: #3584e4; color: #fff; font-weight: bold; }
.grid th.corner { border-color: #f6f5f4; background: #f6f5f4; }
.r-title { height: 37px; }
.r-label { height: 27px; }
.r-value { height: 41px; }
.r-head { height: 20px; }
.r-std { height: 14px; }
.r-short { height: 13px; }
.grid u { text-decoration: none; background: url("data:image/svg+xml,%3Csvg xmlns='http://www.w3.org/2000/svg' width='4' height='2'%3E%3Cpath d='M0 1.500L1 .5L3 1.500L4 .5' fill='none' stroke='%23e03030' stroke-width='.9'/%3E%3C/svg%3E") repeat-x 0 100%; }
.title { background: #e2e8f0; box-shadow: inset -2px -2px #62a0ea, inset -3px -3px #fff; color: #1e293b; font-size: 14px; font-weight: bold; line-height: 18px; text-align: center; }
.missing-q { display: inline-block; width: 8px; border: 1px solid #555; font-size: 7px; line-height: 9px; vertical-align: 1px; }
.k, .v { border-right: 1px solid #cbd5e1; border-bottom: 1px solid #cbd5e1; text-align: center; }
.grid .k { padding-bottom: 1px; color: #475569; }
.v { font-size: 18px; font-weight: bold; line-height: 20px; }
.blue { background: #dbeafe; } .v.blue { color: #1d4ed8; }
.green { background: #dcfce7; } .v.green { color: #15803d; }
.orange { background: #fed7aa; } .v.orange { color: #c2410c; }
.indigo { background: #e0e7ff; } .v.indigo { color: #4338ca; }
.yellow { background: #fef3c7; } .v.yellow { color: #92400e; }
.mint { background: #d1fae5; } .v.mint { color: #065f46; }
.rose { background: #fee2e2; } .v.rose { color: #b91c1c; }
.h { border-right: 1px solid #cbd5e1; background: #0f766e; color: #fff; font-size: 9px; font-weight: bold; line-height: 10px; text-align: center; }
.t, .n { border-right: 1px solid #d5dae0; border-bottom: 1px solid #d5dae0; color: #111; font-size: 9px; line-height: 10px; }
.n { font-size: 10px; font-weight: bold; text-align: center; }
.alt { background: #f8fafc; }

.chart { position: absolute; top: 209px; font-family: Carlito, Lato, sans-serif; }
.chart-bar { left: 22px; }
.chart-pie { left: 235px; }
.ct { font-size: 15px; font-weight: bold; }
.cl { font-size: 8px; }
.cn { font-size: 9px; }
.ca { font-size: 8px; font-weight: bold; }

.vscroll { flex: none; width: 9px; padding: 0 2px; background: #cecdcc; }
.vscroll::before { content: ""; display: block; height: 2px; margin-bottom: 3px; background: #555; }
.vscroll span { display: block; height: 48%; border-radius: 3px; background: #7f807e; }
.hscroll { display: flex; flex: none; justify-content: space-between; align-items: center; height: 10px; margin-right: 9px; padding: 0 1px; background: #cecdcc; }
.hscroll span { width: 47.5%; height: 6px; border-radius: 3px; background: #7f807e; }
.hscroll i { width: 2px; height: 7px; background: #555; }

.tabs { display: flex; flex: none; align-items: center; height: 16px; font-size: 8px; }
.tabnav { display: flex; align-items: center; gap: 1px; padding-left: 6px; }
.add { margin: 0 6px 0 8px; }
.tab { height: 16px; padding: 0 9px 0 8px; }
.tab.active { padding: 0 9px; border-bottom: 2px solid #8a8a88; background: #fff; font-weight: bold; }
.tab-end { width: 1px; height: 10px; background: #cfcecc; }

.side { display: flex; flex: none; width: 39px; border-left: 1px solid #dad9d7; }
.splitter { display: flex; align-self: center; align-items: center; width: 4px; height: 50px; background: #8f908e; }
.splitter span { width: 3px; height: 3px; border-radius: 2px; background: #fff; }
.deck { display: flex; flex: 1; flex-direction: column; align-items: center; gap: 13px; padding: 6px 4px 0 0; }
.deck svg { width: 16px; height: 16px; }

.status { display: grid; flex: none; grid-template-columns: 22px 157fr 218fr 206fr 170fr 45fr 30fr 20fr 20fr 185fr 95px 32px; align-items: center; height: 18px; border-top: 1px solid #d5d4d2; font-size: 8px; }
.status > span { display: flex; align-items: center; height: 14px; padding-left: 6px; border-right: 1px solid #e6e5e3; white-space: nowrap; }
.status .mid { justify-content: center; padding: 0; }
.status .zoom { padding: 0 2px 0 4px; }
.status .pct { border: 0; padding-left: 4px; }
.zoom button { font-size: 14px; font-weight: bold; line-height: 10px; }
.zoom input { flex: 1; height: 12px; margin: 0 3px; appearance: none; }
.zoom input::-webkit-slider-runnable-track { height: 1px; background: #8a8a88; }
.zoom input::-webkit-slider-thumb { width: 3px; height: 7px; margin-top: -3px; border: 1px solid #444; background: #f6f5f4; appearance: none; }
```
